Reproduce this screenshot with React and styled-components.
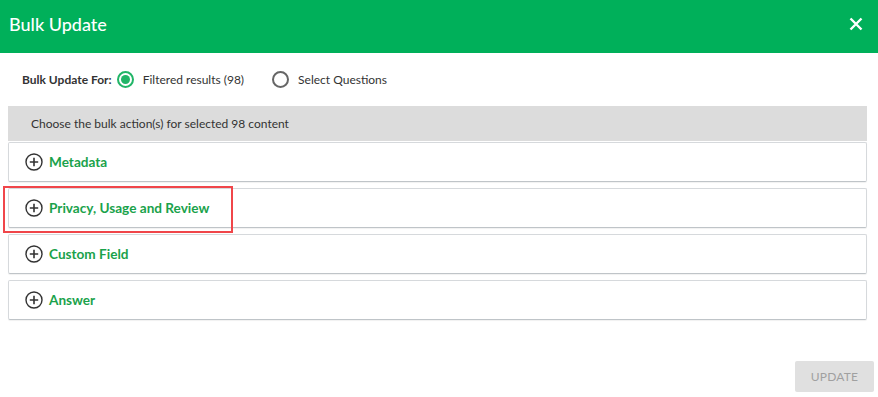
import React, { useState } from 'react';
import styled, { createGlobalStyle } from 'styled-components';

const GlobalStyle = createGlobalStyle`
  html, body { margin: 0; padding: 0; background: #fff; }
  body { font-family: 'Lato', 'Open Sans', sans-serif; }
`;

const Dialog = styled.div`
  width: 878px;
  height: 397px;
  display: flex;
  flex-direction: column;
  background: #fff;
`;

const Header = styled.div`
  box-sizing: border-box;
  height: 53px;
  background: #00b05a;
  display: flex;
  align-items: center;
  justify-content: space-between;
  padding: 0 15px 6px 9px;
`;

const Title = styled.h1`
  margin: 0;
  color: #fff;
  font-size: 18px;
  font-weight: 500;
`;

const CloseButton = styled.button`
  background: none;
  border: none;
  padding: 0;
  width: 14px;
  height: 14px;
  display: flex;
  cursor: pointer;
`;

const Body = styled.div`
  flex: 1;
  display: flex;
  flex-direction: column;
  padding: 0 11px 0 8px;
`;

const ForRow = styled.div`
  display: flex;
  align-items: center;
  height: 53px;
  padding-left: 14px;
  font-size: 12px;
  color: #333;
`;

const ForLabel = styled.span`
  font-weight: 700;
  margin-right: 5px;
`;

const RadioLabel = styled.label`
  display: flex;
  align-items: center;
  gap: 9px;
  margin-right: 28px;
  cursor: pointer;
`;

const RadioDot = styled.span`
  box-sizing: border-box;
  width: 17px;
  height: 17px;
  border-radius: 50%;
  border: 2px solid ${p => (p.checked ? '#21b567' : '#666')};
  display: flex;
  align-items: center;
  justify-content: center;
  &::after {
    content: '';
    width: 9px;
    height: 9px;
    border-radius: 50%;
    background: ${p => (p.checked ? '#21b567' : 'transparent')};
  }
`;

const InfoBar = styled.div`
  height: 35px;
  background: #dcdcdc;
  display: flex;
  align-items: center;
  padding-left: 23px;
  font-size: 12px;
  color: #333;
`;

const Sections = styled.div`
  display: flex;
  flex-direction: column;
  gap: 6px;
  margin-top: 1px;
`;

const Section = styled.div`
  position: relative;
  height: 38px;
  border: 1px solid #d6d9dc;
  border-bottom-color: #bfc4c8;
  border-radius: 2px;
  box-shadow: 0 1px 1px rgba(0, 0, 0, 0.06);
  display: flex;
  align-items: center;
  padding-left: 16px;
  gap: 6px;
  cursor: pointer;
`;

const SectionTitle = styled.span`
  color: #1aa24b;
  font-size: 13.6px;
  font-weight: 700;
`;

const Highlight = styled.div`
  position: absolute;
  left: -6px;
  top: -3px;
  width: 226px;
  height: 43px;
  border: 2px solid #f0464a;
  pointer-events: none;
`;

const Footer = styled.div`
  margin-top: auto;
  display: flex;
  justify-content: flex-end;
  padding: 0 4px 5px 0;
  margin-right: -11px;
`;

const UpdateButton = styled.button`
  width: 79px;
  height: 31px;
  background: #e0e0e0;
  border: none;
  border-radius: 2px;
  color: #a0a0a0;
  font-family: inherit;
  font-size: 12px;
  letter-spacing: 0.2px;
`;

const PlusIcon = () => (
  <svg width="18" height="18" viewBox="0 0 18 18">
    <circle cx="9" cy="9" r="8" fill="none" stroke="#333" strokeWidth="1.4" />
    <path d="M9 4.8v8.4M4.8 9h8.4" stroke="#333" strokeWidth="1.6" />
  </svg>
);

const sections = ['Metadata', 'Privacy, Usage and Review', 'Custom Field', 'Answer'];

export default function App() {
  const [mode, setMode] = useState('filtered');

  return (
    <Dialog>
      <GlobalStyle />
      <Header>
        <Title>Bulk Update</Title>
        <CloseButton aria-label="Close">
          <svg width="14" height="14" viewBox="0 0 14 14">
            <path d="M1.5 1.5l11 11M12.5 1.5l-11 11" stroke="#fff" strokeWidth="2.4" />
          </svg>
        </CloseButton>
      </Header>
      <Body>
        <ForRow>
          <ForLabel>Bulk Update For:</ForLabel>
          <RadioLabel onClick={() => setMode('filtered')}>
            <RadioDot checked={mode === 'filtered'} />
            Filtered results (98)
          </RadioLabel>
          <RadioLabel onClick={() => setMode('select')}>
            <RadioDot checked={mode === 'select'} />
            Select Questions
          </RadioLabel>
        </ForRow>
        <InfoBar>Choose the bulk action(s) for selected 98 content</InfoBar>
        <Sections>
          {sections.map((s, i) => (
            <Section key={s}>
              <PlusIcon />
              <SectionTitle>{s}</SectionTitle>
              {i === 1 && <Highlight />}
            </Section>
          ))}
        </Sections>
        <Footer>
          <UpdateButton disabled>UPDATE</UpdateButton>
        </Footer>
      </Body>
    </Dialog>
  );
}
